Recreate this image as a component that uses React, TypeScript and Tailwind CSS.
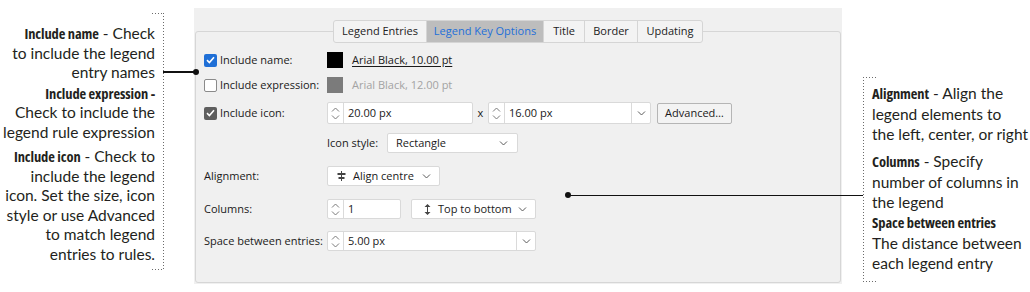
import React from "react"

const NOTE_FONT = "font-['Lato','Open_Sans',sans-serif]"
const HEAD_FONT = "font-['Open_Sans','Noto_Sans',sans-serif]"
const UI_FONT = "font-['Open_Sans','Noto_Sans',sans-serif]"

const VDOTS = "bg-[repeating-linear-gradient(to_bottom,#6b6b6b_0_1px,transparent_1px_3px)]"
const HDOTS = "bg-[repeating-linear-gradient(to_right,#6b6b6b_0_1px,transparent_1px_3px)]"

function Chevron() {
  return (
    <svg width="9" height="5" viewBox="0 0 9 5">
      <path d="M1 0.5L4.5 4L8 0.5" fill="none" stroke="#5a5a5a" strokeWidth="1" />
    </svg>
  )
}

function SpinArrows() {
  return (
    <div className="flex h-full w-[16px] shrink-0 flex-col items-center justify-center gap-[3px] border-r border-[#dadada]">
      <svg width="9" height="5" viewBox="0 0 9 5">
        <path d="M1 4.5L4.5 1L8 4.5" fill="none" stroke="#7a7a7a" strokeWidth="1" />
      </svg>
      <svg width="9" height="5" viewBox="0 0 9 5">
        <path d="M1 0.5L4.5 4L8 0.5" fill="none" stroke="#7a7a7a" strokeWidth="1" />
      </svg>
    </div>
  )
}

function SpinBox({ value, className, dropdown }: { value: string; className: string; dropdown?: boolean }) {
  return (
    <div className={`flex items-center rounded-[2px] border border-[#d9d9d9] bg-white ${className}`}>
      <SpinArrows />
      <span className="flex-1 pl-[4px] text-[#1a1a1a]">{value}</span>
      {dropdown && (
        <div className="flex h-full w-[19px] items-center justify-center border-l border-[#dadada]">
          <Chevron />
        </div>
      )}
    </div>
  )
}

function Combo({ children, className }: { children: React.ReactNode; className: string }) {
  return (
    <div className={`flex items-center rounded-[2px] border border-[#d9d9d9] bg-white ${className}`}>
      {children}
    </div>
  )
}

function CheckBox({ state }: { state: "blue" | "gray" | "off" }) {
  if (state === "off")
    return <div className="h-[13px] w-[13px] shrink-0 rounded-[2px] border border-[#8a8a8a] bg-white" />
  return (
    <div
      className={`flex h-[13px] w-[13px] shrink-0 items-center justify-center rounded-[2px] ${
        state === "blue" ? "bg-[#1f6fd6]" : "bg-[#5e5e5e]"
      }`}>
      <svg width="9" height="8" viewBox="0 0 9 8">
        <path d="M1 4.2L3.4 6.5L8 1.3" fill="none" stroke="white" strokeWidth="1.6" />
      </svg>
    </div>
  )
}

function Tabs() {
  const tabs = [
    { label: "Legend Entries", w: "w-[92px]" },
    { label: "Legend Key Options", w: "w-[117px]", active: true },
    { label: "Title", w: "w-[41px]" },
    { label: "Border", w: "w-[53px]" },
    { label: "Updating", w: "w-[65px]" },
  ]
  return (
    <div className="relative z-10 mt-[12px] flex h-[23px] overflow-hidden rounded-[3px] border border-[#d5d5d5] bg-[#f3f3f3]">
      {tabs.map((t, i) => (
        <div
          key={t.label}
          className={`flex items-center justify-center ${t.w} ${i > 0 ? "border-l border-[#d5d5d5]" : ""} ${
            t.active ? "bg-[#bdbdbd] text-[#1e6fd9]" : "text-[#222]"
          }`}>
          {t.label}
        </div>
      ))}
    </div>
  )
}

function Dialog() {
  return (
    <div className={`mt-[8px] flex h-[276px] w-[648px] shrink-0 flex-col items-center bg-[#f0f0f0] px-px ${UI_FONT} text-[11px] whitespace-nowrap text-[#1a1a1a]`}>
      <Tabs />
      <div className="-mt-[12px] flex h-[252px] w-full flex-col rounded-[3px] border border-[#d6d6d6] pt-[20px] pl-[8px]">
        {/* include name */}
        <div className="flex h-[16px] items-center">
          <div className="flex w-[123px] items-center gap-[3px]">
            <CheckBox state="blue" />
            <span>Include name:</span>
          </div>
          <div className="h-[16px] w-[16px] bg-black" />
          <span className="ml-[9px] underline underline-offset-[2px]">Arial Black, 10.00 pt</span>
        </div>
        {/* include expression */}
        <div className="mt-[9px] flex h-[16px] items-center">
          <div className="flex w-[123px] items-center gap-[3px]">
            <CheckBox state="off" />
            <span>Include expression:</span>
          </div>
          <div className="h-[16px] w-[16px] bg-[#7b7b7b]" />
          <span className="ml-[9px] text-[#a3a3a3]">Arial Black, 12.00 pt</span>
        </div>
        {/* include icon */}
        <div className="mt-[9px] flex h-[22px] items-center">
          <div className="flex w-[123px] items-center gap-[3px]">
            <CheckBox state="gray" />
            <span>Include icon:</span>
          </div>
          <SpinBox value="20.00 px" className="h-[22px] w-[146px]" />
          <span className="w-[15px] text-center">x</span>
          <SpinBox value="16.00 px" dropdown className="h-[22px] w-[163px]" />
          <div className="ml-[6px] flex h-[21px] w-[75px] items-center justify-center rounded-[2px] border border-[#b5b5b5] bg-[#f3f3f3]">
            Advanced…
          </div>
        </div>
        {/* icon style */}
        <div className="mt-[9px] flex h-[20px] items-center pl-[123px]">
          <span className="w-[60px]">Icon style:</span>
          <Combo className="h-[20px] w-[131px] justify-between pr-[9px] pl-[8px]">
            <span>Rectangle</span>
            <Chevron />
          </Combo>
        </div>
        {/* alignment */}
        <div className="mt-[13px] flex h-[20px] items-center">
          <span className="w-[123px]">Alignment:</span>
          <Combo className="h-[20px] w-[113px] pr-[8px] pl-[9px]">
            <svg width="9" height="10" viewBox="0 0 9 10">
              <rect x="0.5" y="2" width="8" height="2" fill="#444" />
              <rect x="1.5" y="6" width="6" height="2" fill="#444" />
              <rect x="4" y="0" width="1" height="10" fill="#444" />
            </svg>
            <span className="ml-[7px] flex-1">Align centre</span>
            <Chevron />
          </Combo>
        </div>
        {/* columns */}
        <div className="mt-[13px] flex h-[20px] items-center">
          <span className="w-[123px]">Columns:</span>
          <SpinBox value="1" className="h-[20px] w-[74px]" />
          <Combo className="ml-[10px] h-[20px] w-[125px] pr-[8px] pl-[12px]">
            <svg width="7" height="11" viewBox="0 0 7 11">
              <path d="M3.5 0L6.5 3H0.5Z M3.5 11L6.5 8H0.5Z" fill="#444" />
              <rect x="3" y="2" width="1" height="7" fill="#444" />
            </svg>
            <span className="ml-[7px] flex-1">Top to bottom</span>
            <Chevron />
          </Combo>
        </div>
        {/* space between */}
        <div className="mt-[12px] flex h-[20px] items-center">
          <span className="w-[123px]">Space between entries:</span>
          <SpinBox value="5.00 px" dropdown className="h-[20px] w-[209px]" />
        </div>
      </div>
    </div>
  )
}

function B({ children }: { children: React.ReactNode }) {
  return <span className={`${HEAD_FONT} text-[14.5px] font-bold font-stretch-[75%] tracking-[-0.1px]`}>{children}</span>
}

export default function App() {
  return (
    <div className={`relative flex h-[292px] w-[1030px] overflow-hidden bg-white ${NOTE_FONT} text-[#231f20]`}>
      {/* left notes */}
      <div className="flex w-[164px] shrink-0">
        <div className="w-[163px] pt-[24px] pr-[8px] text-right text-[15.5px] leading-[19.5px] whitespace-nowrap">
          <p>
            <B>Include name</B> - Check
            <br />
            to include the legend
            <br />
            entry names
          </p>
          <p className="mt-px">
            <B>Include expression -</B>
            <br />
            Check to include the
            <br />
            legend rule expression
          </p>
          <p className="mt-[5px]">
            <B>Include icon</B> - Check to
            <br />
            include the legend
            <br />
            icon. Set the size, icon
            <br />
            style or use Advanced
            <br />
            to match legend
            <br />
            entries to rules.
          </p>
        </div>
        <div className={`relative mt-[13px] h-[257px] w-px ${VDOTS}`}>
          <div className={`absolute top-0 right-0 h-px w-[12px] ${HDOTS}`} />
          <div className={`absolute right-0 bottom-0 h-px w-[12px] ${HDOTS}`} />
        </div>
      </div>

      <div className="ml-[30px] flex">
        <Dialog />
      </div>

      {/* right notes */}
      <div className="ml-[21px] flex">
        <div className={`relative mt-[77px] h-[205px] w-px ${VDOTS}`}>
          <div className={`absolute top-0 left-0 h-px w-[13px] ${HDOTS}`} />
          <div className={`absolute bottom-0 left-0 h-px w-[13px] ${HDOTS}`} />
        </div>
        <div className="ml-[8px] pt-[83px] text-[15.5px] leading-[20px] whitespace-nowrap">
          <p>
            <B>Alignment</B> - Align the
            <br />
            legend elements to
            <br />
            the left, center, or right
          </p>
          <p className="mt-[7px]">
            <B>Columns</B> - Specify
            <br />
            number of columns in
            <br />
            the legend
          </p>
          <p>
            <B>Space between entries</B>
            <br />
            The distance between
            <br />
            each legend entry
          </p>
        </div>
      </div>

      {/* connectors */}
      <div className="absolute top-[71px] left-[163px] h-[1.5px] w-[33px] bg-[#111]" />
      <div className="absolute top-[69px] left-[193px] h-[6px] w-[6px] rounded-full bg-[#111]" />
      <div className="absolute top-[194.5px] left-[568px] h-[1.5px] w-[295px] bg-[#111]" />
      <div className="absolute top-[192px] left-[565px] h-[6px] w-[6px] rounded-full bg-[#111]" />
    </div>
  )
}
